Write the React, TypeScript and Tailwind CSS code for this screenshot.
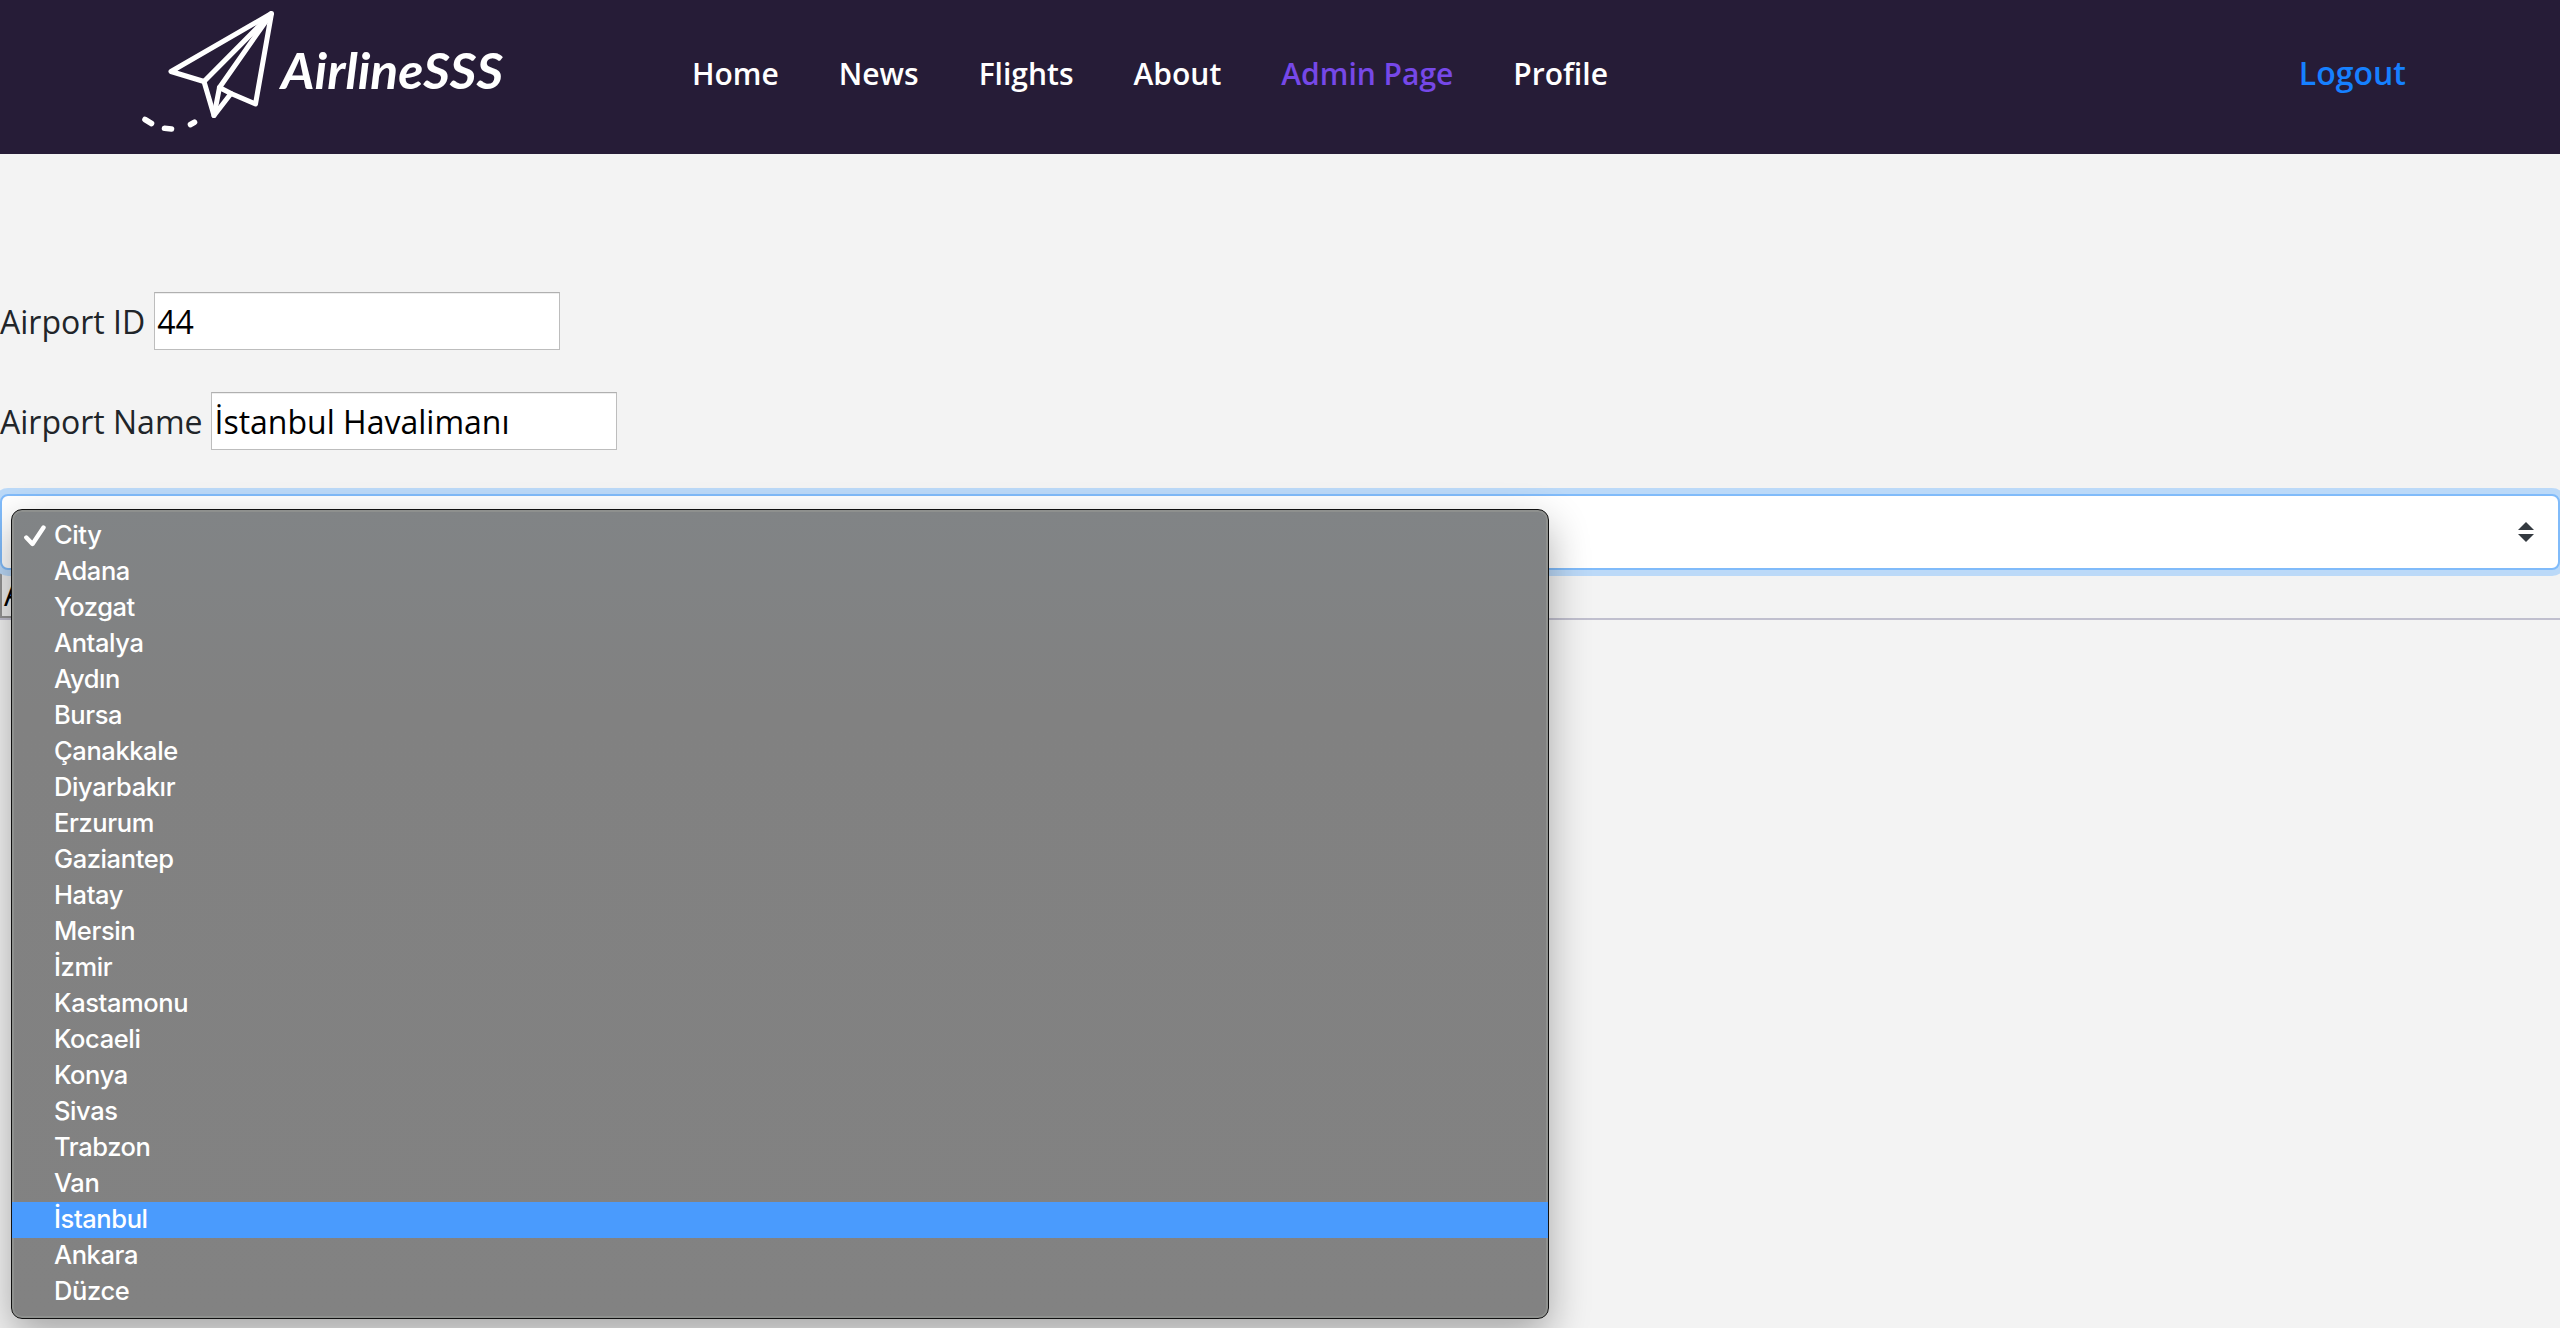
const navItems = ["Home", "News", "Flights", "About", "Admin Page", "Profile"];

const cities = [
  "City", "Adana", "Yozgat", "Antalya", "Aydın", "Bursa", "Çanakkale", "Diyarbakır",
  "Erzurum", "Gaziantep", "Hatay", "Mersin", "İzmir", "Kastamonu", "Kocaeli", "Konya",
  "Sivas", "Trabzon", "Van", "İstanbul", "Ankara", "Düzce",
];

function Logo() {
  return (
    <svg className="h-[154px] w-[420px] shrink-0" viewBox="0 0 420 154" fill="none" stroke="#fff">
      <g strokeWidth="5" strokeLinejoin="round" strokeLinecap="round">
        <path d="M151.500 13.500 51 71.500 84 81.500 94 115.500 111 93.500 135.500 104Z" />
        <path d="M151 14 84 81.500" />
        <path d="M151 14 99.500 87.500 111 93.500" />
        <path d="M99.500 87.500 94 115.500" />
      </g>
      <path d="M25 119.500 31.500 123.500M44.500 128.300l7 .7M70.500 124.500l4-2.300" strokeWidth="5.600" strokeLinecap="round" />
      <text
        x="161"
        y="88.500"
        textLength="222"
        lengthAdjust="spacingAndGlyphs"
        fill="#fff"
        stroke="none"
        className="font-['Lato',sans-serif] text-[50px] font-bold italic"
      >
        AirlineSSS
      </text>
    </svg>
  );
}

function Field({ label, value }: { label: string; value: string }) {
  return (
    <div className="flex h-[58px] items-center gap-[9px]">
      <label className="pt-0.5 leading-[48px] whitespace-nowrap">{label}</label>
      <input
        readOnly
        value={value}
        className="h-[58px] w-[406px] border border-[#bdbdbd] border-t-[#b0b0b0] bg-white px-[2px] text-black shadow-[inset_0_1px_0_#eeeeee] outline-none"
      />
    </div>
  );
}

function CityMenu() {
  return (
    <ul className="absolute top-[15px] left-[11px] z-10 h-[810px] w-[1538px] rounded-[11px] border border-[#111] bg-linear-to-b from-[#818486] via-[#818181] via-25% to-[#828282] pt-2 font-['Inter',sans-serif] text-[25.5px] leading-[34px] font-medium text-white shadow-[inset_0_0_0_2px_#8e908e,0_16px_40px_rgba(0,0,0,0.32)]">
      {cities.map((city) => (
        <li
          key={city}
          className={
            city === "İstanbul"
              ? "flex h-9 items-center bg-[#4a9bfd] pl-[42px]"
              : "flex h-9 items-center pl-[42px]"
          }
        >
          {city === "City" && (
            <svg className="-ml-[30px] mr-2 h-[22px] w-[22px]" viewBox="0 0 22 22" fill="none">
              <path d="M2.300 12.500 8.500 19 19.500 2.500" stroke="#fff" strokeWidth="4.400" strokeLinecap="round" strokeLinejoin="round" />
            </svg>
          )}
          <span className="pb-[3px] tracking-[-0.4px]">{city}</span>
        </li>
      ))}
    </ul>
  );
}

export default function App() {
  return (
    <div className="h-[1328px] w-[2560px] overflow-hidden bg-[#f3f3f3] font-['Open_Sans',sans-serif] text-[32px] text-[#212529]">
      <header className="flex h-[154px] items-center bg-[#261c37] pl-[120px]">
        <Logo />
        <nav className="ml-[152px] flex gap-[60px] pb-[7px] text-[30px] leading-[45px] font-semibold text-white">
          {navItems.map((item) => (
            <a key={item} className={item === "Admin Page" ? "text-[#7648e8]" : ""}>
              {item}
            </a>
          ))}
        </nav>
        <a className="mr-[154px] ml-auto pb-[8px] leading-[48px] font-semibold text-[#1680ff]">Logout</a>
      </header>

      <main className="pt-[138px]">
        <Field label="Airport ID" value="44" />
        <div className="h-[42px]" />
        <Field label="Airport Name" value="İstanbul Havalimanı" />

        <div className="relative mt-[44px]">
          <div className="flex h-[76px] items-center justify-end rounded-lg border-2 border-[#80bbfa] bg-white pr-6 shadow-[0_0_0_6px_#bbd9f8]">
            <svg className="h-5 w-4" viewBox="0 0 16 20" fill="#343a40">
              <path d="M0 8 8 0l8 8ZM0 12h16l-8 8Z" />
            </svg>
          </div>
          <CityMenu />
        </div>
        <div className="flex h-[50px] border-b-2 border-[#c0bfce]">
          <button className="h-[48px] border-2 border-[#949494] bg-[#efefef] px-[2px] leading-[44px] text-black">
            A
          </button>
        </div>
      </main>
    </div>
  );
}
